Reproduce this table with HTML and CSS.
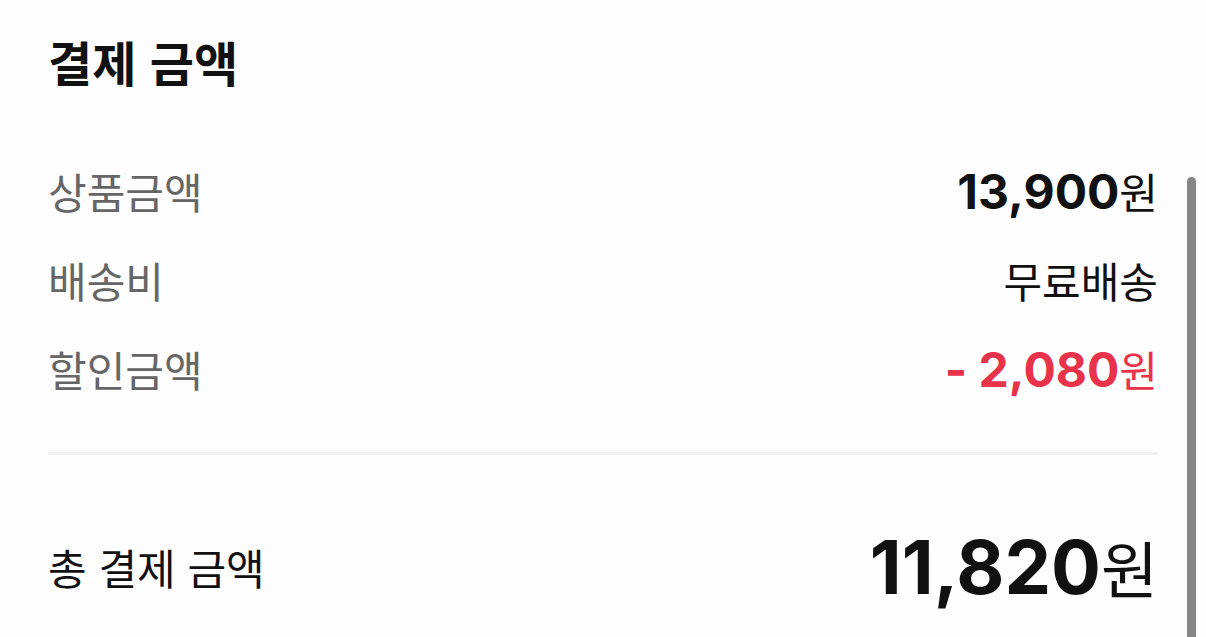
FILE: index.html
```html
<!DOCTYPE html>
<html lang="ko">
<head>
    <meta charset="UTF-8">
    <meta name="viewport" content="width=device-width, initial-scale=1.0">
    <title>결제 금액</title>
    <link rel="stylesheet" href="styles.css">
</head>
<body>
    <div class="payment">
        <h2 class="payment-title">결제 금액</h2>

        <div class="price-list">
            <div class="price-row">
                <span class="price-label">상품금액</span>
                <span class="price-value"><b>13,900</b>원</span>
            </div>
            <div class="price-row">
                <span class="price-label">배송비</span>
                <span class="price-value">무료배송</span>
            </div>
            <div class="price-row">
                <span class="price-label">할인금액</span>
                <span class="price-value discount"><b>- 2,080</b>원</span>
            </div>
        </div>

        <div class="divider"></div>

        <div class="total-row">
            <span class="total-label">총 결제 금액</span>
            <span class="total-value"><b>11,820</b>원</span>
        </div>
    </div>

    <div class="scrollbar"></div>
</body>
</html>
```

FILE: styles.css
```css
body {
    margin: 0;
    padding: 0;
    background: #fdfdfd;
    color: #111;
    font-family: 'Noto Sans CJK KR', sans-serif;
    height: 637px;
    overflow: hidden;
}
.payment {
    padding: 26px 48px 0;
}
.payment-title {
    margin: 0;
    font-size: 48px;
    font-weight: 700;
    line-height: 70px;
}
.price-list {
    margin-top: 65px;
    display: flex;
    flex-direction: column;
}
.price-row {
    display: flex;
    justify-content: space-between;
    align-items: baseline;
    height: 89px;
    line-height: 60px;
}
.price-label {
    font-size: 42px;
    color: #666;
}
.price-value {
    font-size: 42px;
    color: #111;
}
.price-value b {
    font-family: 'Inter', sans-serif;
    font-size: 48px;
    font-weight: 700;
}
.discount {
    color: #e8334a;
}
.divider {
    height: 3px;
    background: #f1f1f1;
    margin-top: 24px;
}
.total-row {
    display: flex;
    justify-content: space-between;
    align-items: center;
    height: 90px;
    margin-top: 67px;
}
.total-label {
    font-size: 42px;
    line-height: 1;
    color: #111;
}
.total-value {
    display: flex;
    align-items: baseline;
    font-size: 62px;
    line-height: 1;
    color: #111;
}
.total-value b {
    font-family: 'Inter', sans-serif;
    font-size: 74px;
    font-weight: 700;
}
.scrollbar {
    position: absolute;
    top: 177px;
    right: 10px;
    width: 9px;
    height: 470px;
    background: #858585;
    border-radius: 5px;
}
```
